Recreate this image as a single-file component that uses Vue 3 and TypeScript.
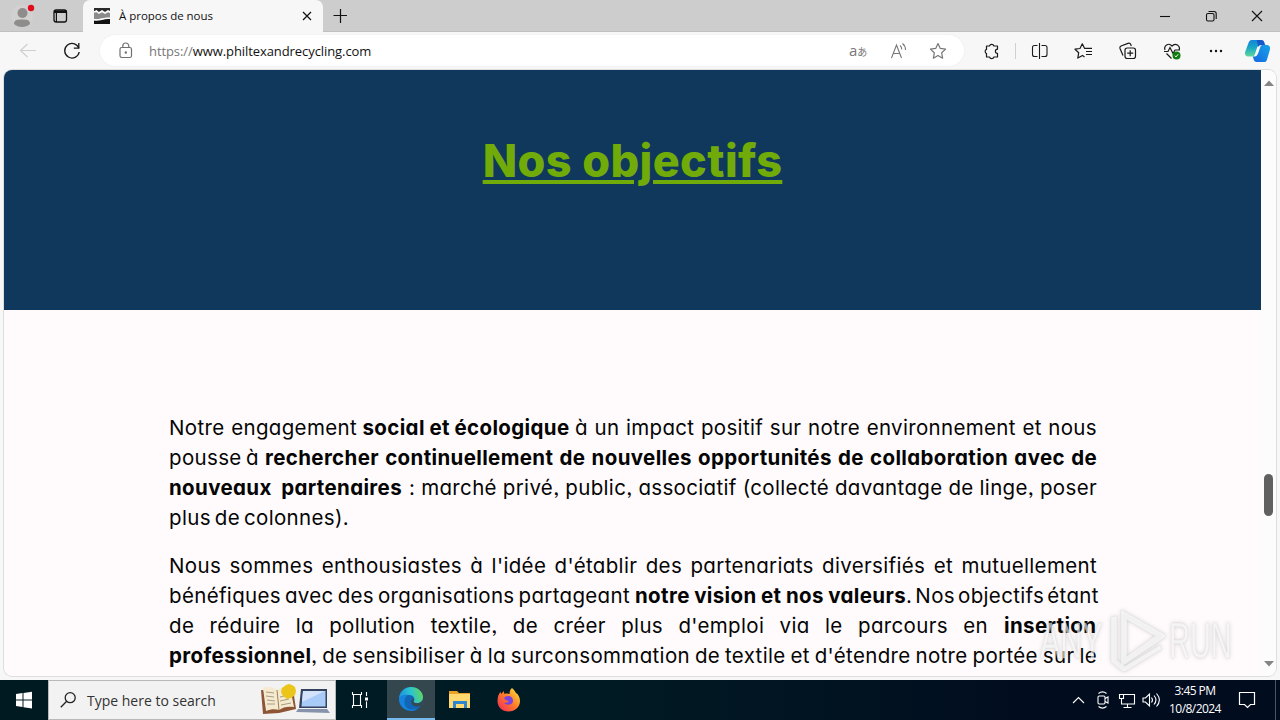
<script setup lang="ts">
interface Segment {
  text: string
  width: number
  bold?: boolean
  glued?: boolean
}

const paragraphs: Segment[][][] = [
  [
    [
      { text: 'Notre engagement', width: 188 },
      { text: 'social et écologique', width: 207, bold: true },
      { text: 'à un impact positif sur notre environnement et nous', width: 522 },
    ],
    [
      { text: 'pousse à', width: 90 },
      { text: 'rechercher continuellement de nouvelles opportunités de collaboration avec de', width: 832, bold: true },
    ],
    [
      { text: 'nouveaux partenaires', width: 233, bold: true },
      { text: ': marché privé, public, associatif (collecté davantage de linge, poser', width: 688 },
    ],
    [{ text: 'plus de colonnes).', width: 180 }],
  ],
  [
    [{ text: "Nous sommes enthousiastes à l'idée d'établir des partenariats diversifiés et mutuellement", width: 928 }],
    [
      { text: 'bénéfiques avec des organisations partageant', width: 461 },
      { text: 'notre vision et nos valeurs', width: 271, bold: true },
      { text: '. Nos objectifs étant', width: 191, glued: true },
    ],
    [
      { text: "de réduire la pollution textile, de créer plus d'emploi via le parcours en", width: 819 },
      { text: 'insertion', width: 93, bold: true },
    ],
    [
      { text: 'professionnel', width: 142, bold: true },
      { text: ", de sensibiliser à la surconsommation de textile et d'étendre notre portée sur le", width: 786, glued: true },
    ],
  ],
]
</script>

<template>
  <div class="screen">
    <header class="tabs">
      <svg class="tabs-left" width="83" height="32" viewBox="0 0 83 32">
        <circle cx="22" cy="16" r="11" fill="#d3d1d0" />
        <circle cx="22.500" cy="13" r="5" fill="#8f8d8c" />
        <path d="M14 24c0-4 3-4.500 8-4.500s8 .5 8 4.500c-2 2-5 3-8 3s-6-1-8-3z" fill="#8f8d8c" />
        <circle cx="31" cy="8" r="3.200" fill="#e00b1c" />
        <rect x="54" y="10" width="12.500" height="12" rx="2.200" fill="none" stroke="#111" stroke-width="1.300" />
        <path d="M54 10.500h12.500v2.500H57V22h-1.200V13H54z" fill="#111" />
      </svg>
      <div class="tab">
        <svg width="16" height="16" viewBox="0 0 16 16">
          <path d="M0 0h16v4l-2-1-3 3-3-3-3 3-3-3-2 2z" fill="#2a2a2a" />
          <path d="M0 5l2-1 3 2 3-2 3 2 3-2 2 1v5c-5-1-11 2-16 1z" fill="#8b8b8b" />
          <path d="M0 4l2.500-1L5 5l3-2 3 2 3-2 2 1" fill="none" stroke="#fff" stroke-width="1.600" />
          <path d="M0 12.500c5 1 10-2 16-1.500v5H0z" fill="#111" />
          <path d="M0 11.500c5 1 10-2 16-1.500" fill="none" stroke="#fff" />
        </svg>
        <span class="tab-title">À propos de nous</span>
        <svg class="tab-close" width="10" height="10" viewBox="0 0 10 10"><path d="M1 1l8 8M9 1l-8 8" stroke="#111" stroke-width="1.200" /></svg>
      </div>
      <svg class="plus" width="14" height="14" viewBox="0 0 14 14"><path d="M7.500 0v14M.5 6.500h14" stroke="#111" stroke-width="1.200" /></svg>
      <svg class="controls" width="138" height="32" viewBox="0 0 138 32" fill="none" stroke="#111" stroke-width="1.100">
        <path d="M18 16.500h10" />
        <rect x="64.500" y="13.500" width="7.500" height="7.500" rx="1.500" />
        <path d="M66.500 11.500h5.500a2.200 2.200 0 0 1 2.200 2.200v5.300" />
        <path d="M110 11l10 10M120 11l-10 10" />
      </svg>
    </header>

    <div class="toolbar">
      <svg class="nav" width="100" height="38" viewBox="0 0 100 38" fill="none">
        <path d="M36 18.500H21M27.500 12l-7 6.500 7 6.500" stroke="#cfcfcf" stroke-width="1.200" />
        <path d="M78.800 16a7.300 7.300 0 1 0 .4 4" stroke="#1a1a1a" stroke-width="1.300" />
        <path d="M78.800 11v5.200h-5" stroke="#1a1a1a" stroke-width="1.300" />
      </svg>
      <div class="address">
        <svg class="lock" width="14" height="17" viewBox="0 0 14 17" fill="none" stroke="#707070" stroke-width="1.200">
          <rect x="1" y="5.500" width="11.500" height="10" rx="1.800" />
          <path d="M3.800 5.500V4a3 3 0 0 1 6 0v1.500" />
          <circle cx="6.800" cy="10.500" r=".6" fill="#707070" />
        </svg>
        <span class="url"><span class="scheme">https://</span>www.philtexandrecycling.com</span>
        <span class="translate">a<span>あ</span></span>
        <svg class="read" width="18" height="18" viewBox="0 0 18 18" fill="none" stroke="#777" stroke-width="1.100">
          <path d="M1.500 16L6.500 3l5 13M3.200 11.500h6.600M10 3.500c1.300 1 1.800 2.300 1.800 4M12.500 1.500c2 1.500 3 3.700 3 6.500" />
        </svg>
        <svg class="star" width="18" height="18" viewBox="0 0 18 18" fill="none" stroke="#777" stroke-width="1.200" stroke-linejoin="round">
          <path d="M9 1.500l2.300 4.900 5.300.7-3.900 3.700.9 5.400L9 13.600l-4.600 2.600.9-5.400L1.400 7.100l5.300-.7z" />
        </svg>
      </div>
      <svg class="ext" width="54" height="38" viewBox="0 0 54 38" fill="none">
        <path d="M22.500 14h3a2.300 2.300 0 0 1 4.400 0h3.600v3.200a2.100 2.100 0 0 0 0 4.200V25h-3.600a2.300 2.300 0 0 1-4.400 0h-3v-3.400a2.300 2.300 0 0 1 0-4.200z" stroke="#1a1a1a" stroke-width="1.200" stroke-linejoin="round" />
        <path d="M51.500 11v16" stroke="#d0d0d0" />
      </svg>
      <svg class="tool" width="44" height="38" viewBox="0 0 44 38" fill="none" stroke="#1a1a1a" stroke-width="1.100">
        <path d="M19.500 13.500h-3a2 2 0 0 0-2 2v7a2 2 0 0 0 2 2h3M23.500 13.500h3.500a2 2 0 0 1 2 2v7a2 2 0 0 1-2 2h-3.500M21.500 11v16" />
      </svg>
      <svg class="tool" width="44" height="38" viewBox="0 0 44 38" fill="none" stroke="#1a1a1a" stroke-width="1.200" stroke-linejoin="round">
        <path d="M22.500 25l-2-1.600-4.700 2.700.9-5.400-3.700-3.500 5-.7 2.300-4.700 2.200 4.500H30M24 19.500h6M24 22.500h6" />
      </svg>
      <svg class="tool" width="44" height="38" viewBox="0 0 44 38" fill="none" stroke="#1a1a1a" stroke-width="1.200">
        <rect x="19" y="16" width="10.500" height="10.500" rx="2.200" />
        <path d="M24.200 18.200v6M21.200 21.200h6M17 23.500l-3-7c-.5-1.300 0-2 1-2.500l7-2.600c1.500-.5 2.300 0 2.800 1.200l.5 1.400" />
      </svg>
      <svg class="tool" width="44" height="38" viewBox="0 0 44 38" fill="none" stroke="#1a1a1a" stroke-width="1.200">
        <path d="M15 18c-1.500-4 3.500-8 7-4 3.500-4 8.500 0 7.200 4M14 19.500h4l2-4 3 6 2-3.500h5M16.500 21.500l5 5" />
        <circle cx="26.500" cy="23.500" r="4" fill="#107c10" stroke="none" />
        <path d="M24.800 23.700l1.200 1.200 2.200-2.600" stroke="#fff" stroke-width="1" />
      </svg>
      <svg class="tool" width="44" height="38" viewBox="0 0 44 38" fill="#111">
        <circle cx="17" cy="19" r="1.200" /><circle cx="22" cy="19" r="1.200" /><circle cx="27" cy="19" r="1.200" />
      </svg>
      <svg class="copilot" width="42" height="38" viewBox="0 0 42 38">
        <defs>
          <linearGradient id="cpA" x1="0" y1="0" x2="0" y2="1"><stop offset="0" stop-color="#1583d8" /><stop offset=".45" stop-color="#18a6c8" /><stop offset="1" stop-color="#5fd89a" /></linearGradient>
          <linearGradient id="cpB" x1="1" y1="0" x2="0" y2="1"><stop offset="0" stop-color="#15a4e9" /><stop offset="1" stop-color="#1767e0" /></linearGradient>
        </defs>
        <g transform="translate(.8 0)">
          <path d="M13 8h9c3 0 3 3 4 5h-4c-3 0-3.500 2-4.500 5l-1.500 4.500c-.7 1.500-1.500 2-3 2h-3c-3 0-4.500-2-3.500-5l3-8c.7-2 1.500-3.500 3.500-3.500z" fill="url(#cpA)" />
          <path d="M26 30h-8c-3 0-3-3-4-5.500h1.500c2.500 0 3.500-2 4.500-5l1.500-4.500c.6-1.700 1.500-2 3-2h3c3 0 4.500 2 3.500 5l-2.500 8.500c-.6 2-1 3.500-2.500 3.500z" fill="url(#cpB)" />
          <path d="M18 8h4.500c3 0 3 3 4 5h-4c-1.700 0-2.500.8-3.100 2z" fill="#1558c9" />
        </g>
      </svg>
    </div>

    <div class="viewport">
      <main class="page">
        <section class="hero"><h1>Nos objectifs</h1></section>
        <section class="copy">
          <div v-for="(paragraph, p) in paragraphs" :key="p" class="paragraph">
            <div v-for="(line, l) in paragraph" :key="l" class="line">
              <span v-for="(seg, s) in line" :key="s" class="seg" :class="{ bold: seg.bold, glued: seg.glued }" :style="{ width: seg.width + 'px' }">{{ seg.text }}</span>
            </div>
          </div>
        </section>
      </main>
      <div class="scrollbar">
        <svg width="10" height="6" viewBox="0 0 10 6"><path d="M0 6l5-5.500L10 6z" fill="#858585" /></svg>
        <div class="thumb"></div>
        <svg width="10" height="6" viewBox="0 0 10 6"><path d="M0 0l5 5.500L10 0z" fill="#858585" /></svg>
      </div>
    </div>

    <svg class="watermark" width="220" height="70" viewBox="0 0 220 70">
      <g class="mark">
        <text transform="translate(6 52) scale(.61 1)">ANY</text>
        <text transform="translate(135 52) scale(.58 1)">RUN</text>
        <path fill-rule="evenodd" d="M88 4l42 24c2 1 2 3 0 4L90 59c-2 1-3 0-3-2V6c0-2 0-3 1-2zM93 14v36l28-20z" />
        <path d="M77 11l6-1v44l8 6 35-21 2 4-36 22c-2 1-3 1-5-1l-10-8z" />
      </g>
    </svg>

    <footer class="taskbar">
      <svg class="start" width="48" height="40" viewBox="0 0 48 40" fill="#fff">
        <path d="M16 14l6.500-1v6.500H16zM23.500 12.900l8.500-1.200v7.800h-8.500zM16 20.500h6.500V27l-6.500-1zM23.500 20.500H32v7.900l-8.500-1.200z" />
      </svg>
      <div class="search">
        <svg width="18" height="18" viewBox="0 0 18 18" fill="none" stroke="#222" stroke-width="1.300"><circle cx="10.200" cy="6.700" r="5" /><path d="M6.700 10.300L.8 16.300" /></svg>
        <span>Type here to search</span>
        <svg class="doodle" width="72" height="34" viewBox="0 0 72 34">
          <path d="M1 7l16 1 16-2 3 20-17 4-16 1z" fill="#8d5535" />
          <path d="M3 5c5-2 11-1 14 2 4-3 9-4 13-3l4 20c-6-1-11 0-15 3-4-1-8-1-13 1z" fill="#f4ead0" />
          <path d="M17 7l2 20" stroke="#a77c55" />
          <path d="M6 9l8 1M6 13l8 1M7 17l8 1M7 21l8 0M20 14l8-2M20 18l9-2M21 22l10-2" stroke="#a99c80" />
          <path d="M29 1l3 1 3 2 1 4-1 4-4 3-4 1-4-3-2-4 1-4 4-3z" fill="#ecc51b" />
          <path d="M41 6h26v19H39z" fill="#33435f" />
          <path d="M43 8h22.500v15.500H41.500z" fill="#a9cbf8" />
          <path d="M43 8h22L42 19z" fill="#d2e3fb" />
          <path d="M38 26h29l3 4-34-1z" fill="#8793ac" />
        </svg>
      </div>
      <svg class="app first" width="51" height="40" viewBox="0 0 51 40" fill="none" stroke="#fff" stroke-width="1.100">
        <path d="M16.500 12v2.500h9V12M16.500 28v-2.500h9V28M17.500 14.500v11M24.500 14.500v11M30.500 12v4M30.500 21.500V28" /><rect x="29" y="17.500" width="3" height="3" fill="#fff" stroke="none" />
      </svg>
      <div class="app-active">
        <svg width="26" height="26" viewBox="0 0 26 26">
          <defs><linearGradient id="edgeA" x1="0" y1=".5" x2="1" y2=".3"><stop offset="0" stop-color="#1b91dc" /><stop offset=".5" stop-color="#2bc3d2" /><stop offset="1" stop-color="#65d858" /></linearGradient></defs>
          <circle cx="13" cy="13" r="12" fill="#1266b6" />
          <path d="M1 12C2 5 7 1 13 1c7 0 12 5 12 10 0 4-3 6-6 6-2 0-4-.6-3.500-2 2-3-.5-6-4-6C6 8.500 2 10 1 14z" fill="url(#edgeA)" />
          <path d="M1 13c1-3 5-5 9-4-4 2-5 9-1 13 3 2 8 2 11 0-3 3-7 3.500-11 2C4 22 1 18 1 13z" fill="#1683dc" />
          <path d="M15.500 15c-.5 1.500 1.500 2.500 4 2.200 2-.2 4-1.200 5-2.700l1.500-.5v5l-3.200 1c-4 1.500-9.500 0-9.500-4 0-2 1.500-3.500 2.500-3.500.8.700.8 1.500-.3 2.500z" fill="#344953" />
        </svg>
      </div>
      <svg class="app" width="49" height="40" viewBox="0 0 49 40">
        <path d="M14 11h8l2 2h11v15H14z" fill="#e8a229" /><path d="M14 14h21v14H14z" fill="#ffd970" />
        <path d="M18 21h14v7h-3v-4h-8v4h-3z" fill="#2f86cf" />
      </svg>
      <svg class="app" width="49" height="40" viewBox="0 0 49 40">
        <defs><linearGradient id="fox" x1="1" y1="0" x2="0" y2="1"><stop offset="0" stop-color="#ffed3d" /><stop offset=".5" stop-color="#ff7a2a" /><stop offset="1" stop-color="#f0215f" /></linearGradient></defs>
        <path d="M28 8c2 2 3 3 4 5 2 1 4 4 4 8 0 6-5 10.500-11.500 10.500S13.500 27 13.500 21c0-4 1-7 3-9l1 2 2-3 1 3c2-1 4 0 5 0 0-3 1-5 2.500-6z" fill="url(#fox)" />
        <path d="M20 18c2-3 9-3 9 3 0 4-6 5-9 2 3 0 4-1 5-2-2 0-4-1-5-3z" fill="#7a42df" />
      </svg>
      <svg class="tray" width="100" height="40" viewBox="0 0 100 40" fill="none" stroke="#fff" stroke-width="1.100">
        <path d="M7 23l5.500-5.500 5.500 5.500" />
        <rect x="32" y="16" width="7" height="8" rx="1.200" /><path d="M39 18.500l3-1.500v6l-3-1.500M32.500 13.500c2.500-2 5.500-2 8 0M32.500 26.500c2.500 2 5.500 2 8 0" />
        <path d="M58 14.500h10.500v9.500H55.500v-5M61.500 24v3M57.500 27.500h8M53.500 14.500h4v4h-4zM55.500 18.500v2" />
        <path d="M77 18h2.500l4-4v12l-4-4H77zM85.500 17.500c1.300 1.700 1.300 3.300 0 5M88 15.500c2.600 3 2.600 6 0 9M90.500 13.500c3.800 4.300 3.800 8.700 0 13" />
      </svg>
      <div class="clock"><span>3:45 PM</span><span>10/8/2024</span></div>
      <svg class="note" width="56" height="40" viewBox="0 0 56 40" fill="none" stroke="#fff" stroke-width="1.200">
        <path d="M15.500 12.500h15v12h-4l-3 3-3-3h-5z" /><path d="M51.500 0v40" stroke="#4a5361" stroke-width="1" />
      </svg>
    </footer>
  </div>
</template>

<style>
html, body { margin: 0; overflow: hidden; }
</style>

<style scoped>
.screen { position: relative; width: 1280px; height: 720px; overflow: hidden; display: flex; flex-direction: column; background: #f7f7f7; font-family: "Open Sans", "Noto Sans", "Noto Sans CJK JP", sans-serif; color: #111; }
svg { display: block; flex: none; }
.tabs { height: 32px; flex: none; display: flex; align-items: center; background: #cdcdcd; box-shadow: inset 0 -1px #c0c0c0; }
.tab { width: 240px; height: 32px; display: flex; align-items: center; box-sizing: border-box; padding-left: 11px; background: #f7f7f7; border-radius: 7px 7px 0 0; }
.tab-title { margin-left: 9px; width: 96px; margin-top: -1px; font-size: 11.5px; letter-spacing: -.02px; white-space: nowrap; }
.tab-close { margin-left: 87px; }
.plus { margin-left: 10px; }
.controls { margin-left: auto; }
.toolbar { height: 38px; flex: none; display: flex; background: #f7f7f7; }
.address { width: 864px; height: 31px; margin-top: 3px; border-radius: 16px; background: #fff; display: flex; align-items: center; box-shadow: 0 0 2px #e7e7e7; }
.lock { margin-left: 19px; }
.url { margin-left: 16px; width: 600px; font-size: 13px; letter-spacing: -.08px; white-space: nowrap; }
.scheme { color: #777; }
.translate { margin-left: 100px; width: 31px; font-size: 15px; color: #777; white-space: nowrap; line-height: 20px; }
.translate span { font-size: 10px; }
.read { margin-left: 10px; }
.star { margin-left: 21px; }
.viewport { position: relative; box-sizing: border-box; width: 1272px; height: 606px; margin-left: 4px; flex: none; display: flex; background: #fffbfc; border-radius: 8px; overflow: hidden; box-shadow: 0 0 0 1px #dedede; }
.page { width: 1257px; height: 606px; overflow: hidden; font-family: Inter, "Open Sans", sans-serif; font-feature-settings: "cv11", "ss03"; }
.hero { height: 240px; background: #10385d; display: flex; justify-content: center; }
h1 { margin: 61px 0 0; height: 60px; line-height: 60px; font-size: 45px; font-weight: 800; letter-spacing: .4px; color: #70ab0a; white-space: nowrap; text-decoration: underline; text-decoration-thickness: 4px; text-underline-offset: 3px; }
.copy { width: 930px; margin: 103px 0 0 165px; }
.paragraph { margin-bottom: 18px; }
.line { display: flex; width: 928px; height: 30px; line-height: 30px; font-size: 20.5px; color: #050505; }
.seg { flex: none; white-space: nowrap; text-align: justify; text-align-last: justify; font-weight: 380; letter-spacing: .34px; word-spacing: -3px; }
.seg + .seg { margin-left: auto; }
.line .seg.glued { margin-left: 0; }
.seg.bold { font-weight: 700; letter-spacing: .36px; }
.scrollbar { width: 15px; display: flex; flex-direction: column; align-items: center; box-sizing: border-box; padding-top: 10px; background: #fcfcfc; }
.thumb { width: 9px; height: 42px; border-radius: 5px; background: #606060; margin-top: 388px; margin-bottom: 145px; }
.watermark { position: absolute; left: 1034px; top: 606px; }
.mark { fill: rgba(255, 255, 255, .6); stroke: rgba(190, 190, 190, .2); stroke-width: 1; font-family: "Liberation Sans", Arial, sans-serif; font-size: 50px; filter: drop-shadow(0 0 2px rgba(100, 100, 100, .4)); }
.taskbar { height: 40px; flex: none; margin-top: 4px; display: flex; color: #fff; background: linear-gradient(90deg, #001a22 0, #001b24 45%, #010c1e 82%, #010c1f 100%); }
.search { box-sizing: border-box; width: 288px; height: 40px; display: flex; align-items: center; background: #f2f2f2; border: 1px solid #b9b9b9; color: #333; padding-left: 11px; }
.search span { margin-left: 9px; width: 168px; font-size: 14px; white-space: nowrap; }
.doodle { margin-left: 5px; }
.app-active { width: 48px; height: 40px; box-sizing: border-box; background: #34474f; border-bottom: 2px solid #76b9ed; display: flex; align-items: center; justify-content: center; }
.tray { margin-left: auto; }
.clock { width: 58px; display: flex; flex-direction: column; align-items: center; font-size: 12px; line-height: 18px; padding-top: 2px; letter-spacing: -.55px; white-space: nowrap; }
</style>
